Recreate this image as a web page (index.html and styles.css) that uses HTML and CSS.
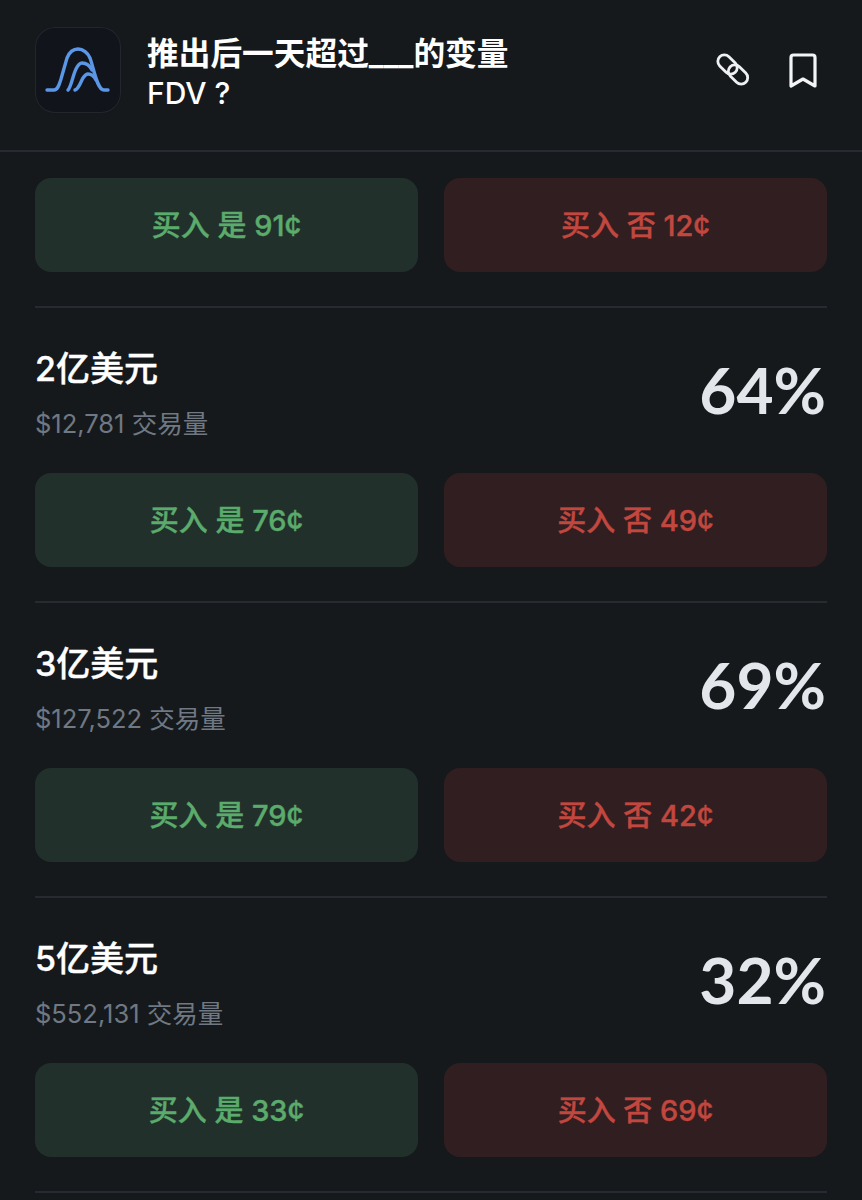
FILE: index.html
```html
<!DOCTYPE html>
<html lang="zh-CN">
<head>
  <meta charset="UTF-8" />
  <meta name="viewport" content="width=device-width, initial-scale=1.0" />
  <title>推出后一天超过___的变量 FDV？</title>
  <link rel="stylesheet" href="styles.css">
</head>
<body>
  <header class="top">
    <div class="logo">
      <svg width="86" height="86" viewBox="0 0 86 86" fill="none" stroke="#5b97e6" stroke-width="3.400" stroke-linecap="round">
        <path d="M12 63H19C23 63 24 58 26 52L32 31C34 26 38 22 43 22C48 22 53 26 55 31C59 42 62 63 69 63H73" />
        <path d="M33 63C36 60 38 48 41 42C43 38 45 36 47 36C51 36 55 39 57 43" />
        <path d="M40 63C44 62 46 54 48 51C50 48 51 47 53 47C56 47 59 49 61 53" />
      </svg>
    </div>
    <h1 class="question">推出后一天超过___的变量<br><span class="latin">FDV ?</span></h1>
    <div class="actions">
      <svg width="36" height="36" viewBox="0 0 36 36" fill="none" stroke="#eef0f3" stroke-width="2.800">
        <rect x="-11" y="-6.500" width="22" height="13" rx="6.500" transform="translate(11.500 11.500) rotate(45)" />
        <rect x="-11" y="-6.500" width="22" height="13" rx="6.500" transform="translate(22 21.500) rotate(45)" />
      </svg>
      <svg width="30" height="36" viewBox="0 0 30 36" fill="none" stroke="#f2f4f6" stroke-width="3.200" stroke-linejoin="round">
        <path d="M3 4.500C3 3 4 2 5.500 2H24.500C26 2 27 3 27 4.500V33L15 26L3 33Z" />
      </svg>
    </div>
  </header>

  <main class="list">
    <div class="trade trade-first">
      <button class="buy yes"><span>买入 是 91¢</span></button>
      <button class="buy no"><span>买入 否 12¢</span></button>
    </div>

    <section class="market">
      <div class="info">
        <div>
          <div class="name">2亿美元</div>
          <div class="volume">$12,781 交易量</div>
        </div>
        <div class="chance">64%</div>
      </div>
      <div class="trade">
        <button class="buy yes"><span>买入 是 76¢</span></button>
        <button class="buy no"><span>买入 否 49¢</span></button>
      </div>
    </section>

    <section class="market">
      <div class="info">
        <div>
          <div class="name">3亿美元</div>
          <div class="volume">$127,522 交易量</div>
        </div>
        <div class="chance">69%</div>
      </div>
      <div class="trade">
        <button class="buy yes"><span>买入 是 79¢</span></button>
        <button class="buy no"><span>买入 否 42¢</span></button>
      </div>
    </section>

    <section class="market">
      <div class="info">
        <div>
          <div class="name">5亿美元</div>
          <div class="volume">$552,131 交易量</div>
        </div>
        <div class="chance">32%</div>
      </div>
      <div class="trade">
        <button class="buy yes"><span>买入 是 33¢</span></button>
        <button class="buy no"><span>买入 否 69¢</span></button>
      </div>
    </section>
  </main>
</body>
</html>
```

FILE: styles.css
```css
body {
  font-family: Inter, 'Noto Sans CJK SC', sans-serif;
  margin: 0;
  padding: 0;
  height: 1200px;
  overflow: hidden;
  background-color: #15191c;
  color: #fff;
}
.top {
  display: flex;
  align-items: center;
  height: 150px;
  padding: 0 44px 0 35px;
  border-bottom: 2px solid #262b31;
}
.logo {
  width: 86px;
  height: 86px;
  margin-top: -10px;
  border-radius: 20px;
  background-color: #12141c;
  box-shadow: inset 0 0 0 1px #23262d;
  flex-shrink: 0;
}
.question {
  flex: 1;
  margin: -3px 0 0 26px;
  font-size: 31.7px;
  font-weight: 600;
  line-height: 39px;
}
.latin {
  font-size: 30px;
  font-weight: 500;
}
.actions {
  display: flex;
  gap: 36px;
  margin-top: -8px;
}
.list {
  padding: 26px 35px 0;
}
.trade {
  display: flex;
  gap: 26px;
}
.trade-first {
  padding-bottom: 34px;
}
.buy {
  flex: 1;
  height: 94px;
  border: none;
  border-radius: 16px;
  font-family: inherit;
  font-size: 29px;
  font-weight: 500;
  -webkit-text-stroke: 0.4px;
  padding: 0 0 4px;
}
.yes {
  background-color: #21302a;
  color: #5bab6c;
}
.no {
  background-color: #311e20;
  color: #c2473f;
}
.market {
  border-top: 2px solid #262b31;
  padding: 36px 0 34px;
}
.market:last-child {
  border-bottom: 2px solid #262b31;
}
.info {
  display: flex;
  justify-content: space-between;
  align-items: flex-start;
  height: 129px;
}
.name {
  font-size: 34px;
  font-weight: 500;
  -webkit-text-stroke: 0.4px;
  line-height: 50px;
}
.volume {
  font-size: 25.5px;
  line-height: 38px;
  margin-top: 11px;
  color: #6f7883;
}
.chance {
  font-family: Lato, sans-serif;
  font-size: 64px;
  font-weight: 700;
  line-height: 92px;
  color: #e3e7ec;
  margin-right: 1px;
}
```
